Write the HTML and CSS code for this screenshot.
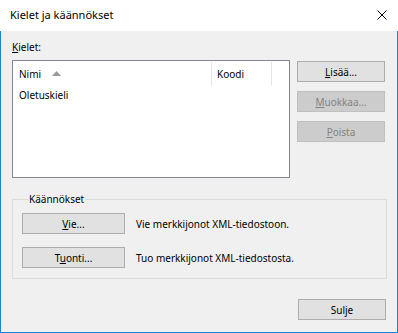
FILE: index.html
```html
<!DOCTYPE html>
<html lang="fi">
<head>
<meta charset="utf-8">
<title>Kielet ja käännökset</title>
<link rel="stylesheet" href="styles.css">
</head>
<body>
<div class="window">
  <div class="titlebar">
    <span class="title">Kielet ja käännökset</span>
    <svg class="close" width="10" height="10" viewBox="0 0 10 10"><path d="M0.5 0.5 L9.5 9.5 M9.5 0.5 L0.5 9.5" stroke="#000" stroke-width="1" fill="none"/></svg>
  </div>
  <div class="content">
    <div class="label"><u>K</u>ielet:</div>
    <div class="main-row">
      <div class="listview">
        <div class="lv-header">
          <div class="lv-col col-name">Nimi <svg class="sort" width="9" height="5" viewBox="0 0 9 5"><path d="M0 5 L4.5 0 L9 5 Z" fill="#9a9a9a"/></svg></div>
          <div class="lv-col col-code">Koodi</div>
        </div>
        <div class="lv-row">Oletuskieli</div>
      </div>
      <div class="side-buttons">
        <button class="btn"><u>L</u>isää...</button>
        <button class="btn" disabled><u>M</u>uokkaa...</button>
        <button class="btn" disabled><u>P</u>oista</button>
      </div>
    </div>
    <fieldset class="group">
      <legend class="group-title">Käännökset</legend>
      <div class="group-row">
        <button class="btn btn-wide"><u>V</u>ie...</button>
        <span class="desc">Vie merkkijonot XML-tiedostoon.</span>
      </div>
      <div class="group-row">
        <button class="btn btn-wide">T<u>u</u>onti...</button>
        <span class="desc">Tuo merkkijonot XML-tiedostosta.</span>
      </div>
    </fieldset>
    <div class="footer">
      <button class="btn">Sulje</button>
    </div>
  </div>
</div>
</body>
</html>
```
FILE: styles.css
```css
* { box-sizing: border-box; }
html, body { margin: 0; padding: 0; }
body {
  font-family: "Noto Sans", "Liberation Sans", sans-serif;
  font-size: 10px;
  color: #000;
  background: #fff;
}
.window {
  width: 398px;
  height: 333px;
  display: flex;
  flex-direction: column;
}
.titlebar {
  height: 31px;
  background: #fff;
  display: flex;
  align-items: center;
  justify-content: space-between;
  padding: 0 11px 2px 10px;
}
.title { font-size: 11px; line-height: 16px; }
.close { display: block; margin-top: 1px; }
.content {
  flex: 1;
  background: #f0f0f0;
  border: 1px solid #1883d7;
  border-top: none;
  padding: 9px 11px 0 11px;
  display: flex;
  flex-direction: column;
}
.label { line-height: 14px; height: 14px; margin-bottom: 6px; }
.main-row { display: flex; gap: 7px; align-items: flex-start; }
.listview {
  width: 278px;
  height: 118px;
  background: #fff;
  border: 1px solid #828790;
}
.lv-header { display: flex; height: 24px; margin-top: 1px; }
.lv-col {
  display: flex;
  align-items: center;
  padding-left: 6px;
  border-right: 1px solid #e5e5e5;
  line-height: 14px;
}
.col-name { width: 199px; }
.col-code { width: 60px; padding-left: 5px; }
.sort { margin-left: 11px; margin-top: -1px; }
.lv-row { padding-left: 6px; line-height: 14px; margin-top: 2px; }
.side-buttons {
  display: flex;
  flex-direction: column;
  gap: 9px;
  padding-top: 1px;
}
.btn {
  font: inherit;
  color: #000;
  width: 88px;
  height: 21px;
  padding: 0;
  background: #e1e1e1;
  border: 1px solid #adadad;
  line-height: 14px;
}
.btn:disabled {
  background: #cccccc;
  border-color: #bfbfbf;
  color: #838383;
}
.btn-wide { width: 103px; }
.group {
  margin: 14px 0 0 0;
  padding: 7px 9px 10px 9px;
  border: 1px solid #dcdcdc;
  width: 375px;
  height: 87px;
  min-width: 0;
}
.group-title {
  padding: 0 1px;
  margin-left: 6px;
  line-height: 14px;
}
.group-row { display: flex; align-items: center; gap: 11px; height: 21px; }
.group-row + .group-row { margin-top: 13px; }
.desc { line-height: 14px; }
.footer {
  display: flex;
  justify-content: flex-end;
  margin-top: 20px;
}
```
